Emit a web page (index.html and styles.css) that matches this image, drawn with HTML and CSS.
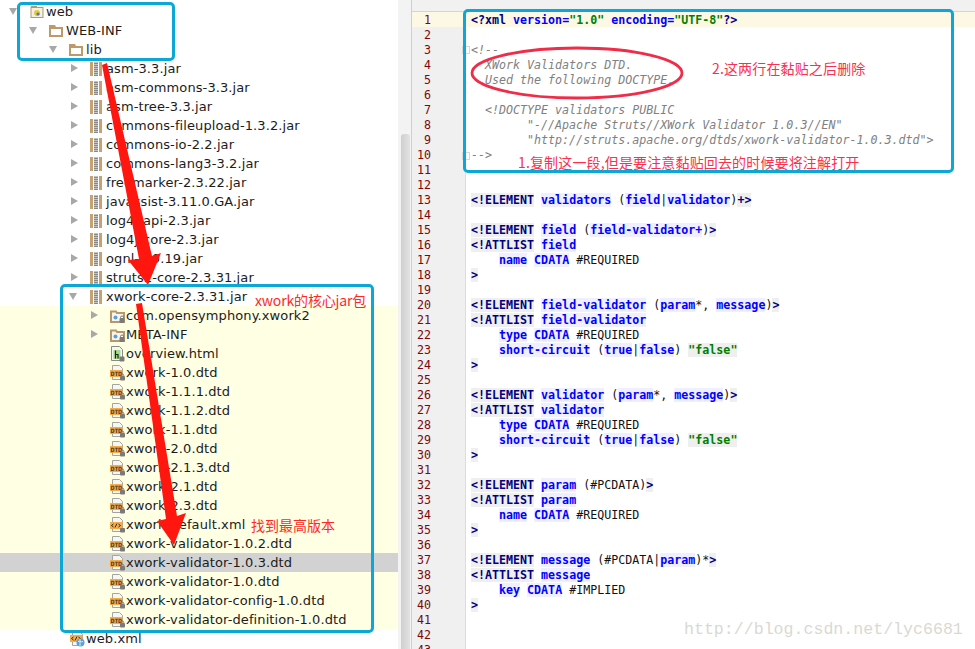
FILE: index.html
```html
<!DOCTYPE html>
<html lang="en">
<head>
<meta charset="utf-8">
<title>xwork-validator DTD</title>
<link rel="stylesheet" href="styles.css">
</head>
<body>
<svg class="defs" width="0" height="0" aria-hidden="true">
  <symbol id="i-web" viewBox="0 0 15 16">
    <rect x="1" y="3.5" width="12" height="10" fill="#f4f0e4" stroke="#b8976a"/>
    <rect x="1" y="2" width="6" height="2" fill="#b8976a"/>
    <circle cx="7" cy="9" r="3" fill="#e8c83a"/>
    <circle cx="8" cy="10" r="1.6" fill="#4a7ac0"/>
  </symbol>
  <symbol id="i-folder" viewBox="0 0 15 16">
    <path d="M0 3h6l1 2h7v10H0z" transform="translate(0 -1)" fill="#bd9a6a"/>
    <rect x="2" y="6" width="10" height="6" fill="#fff"/>
  </symbol>
  <symbol id="i-jar" viewBox="0 0 12 14">
    <rect x="0" y="0" width="3" height="14" fill="#c6a271"/>
    <rect x="9" y="0" width="3" height="14" fill="#c6a271"/>
    <rect x="4" y="0" width="4" height="14" fill="#c4c4c4"/>
    <path d="M4 1.5h4M4 3.5h4M4 5.5h4M4 7.5h4M4 9.5h4M4 11.5h4M4 13.5h4" stroke="#777" stroke-width=".8"/>
  </symbol>
  <symbol id="i-pkg" viewBox="0 0 15 16">
    <path d="M1 3.5h5l1 1.5h7v9H1z" fill="#f8f6ec" stroke="#b8976a" stroke-width="2"/>
    <circle cx="5.5" cy="9.5" r="2" fill="#5aa0d8"/>
    <rect x="9.5" y="10" width="5" height="5" rx="1" fill="#7a7a7a"/>
    <circle cx="12" cy="9.5" r="1.5" fill="none" stroke="#7a7a7a"/>
  </symbol>
  <symbol id="i-html" viewBox="0 0 15 16">
    <path d="M1.5 .5h8l3 3v11h-11z" fill="#f6f6f0" stroke="#8a8a8a"/>
    <rect x="3.5" y="4" width="7" height="9" fill="#a4dc8a"/>
    <path d="M5.5 4.5v8M5.5 8.5h2.5v4" fill="none" stroke="#222" stroke-width="1.2"/>
    <rect x="9.5" y="10.5" width="5" height="5" rx="1" fill="#7a7a7a"/>
  </symbol>
  <symbol id="i-dtd" viewBox="0 0 15 16">
    <path d="M2.5 .5h7l3 3v11h-10z" fill="#f6f6f2" stroke="#a4a4a4"/>
    <rect x="0" y="5" width="12.5" height="7" fill="#f4ab4c"/>
    <text class="dtd-label" x=".6" y="10.8" textLength="11.4" lengthAdjust="spacingAndGlyphs">DTD</text>
    <rect x="10" y="11" width="5" height="4.5" rx="1" fill="#7a7a7a"/>
    <circle cx="12.5" cy="10.5" r="1.3" fill="none" stroke="#7a7a7a"/>
  </symbol>
  <symbol id="i-xml" viewBox="0 0 15 16">
    <path d="M2.5 .5h7l3 3v11h-10z" fill="#f6f6f2" stroke="#a4a4a4"/>
    <rect x="0" y="5" width="12.5" height="7" fill="#f4ab4c"/>
    <path d="M3.5 7l-2 1.5 2 1.5M8.5 7l2 1.5-2 1.5M5 10.5l2-4" fill="none" stroke="#3a2a10"/>
    <rect x="10" y="11" width="5" height="4.5" rx="1" fill="#7a7a7a"/>
  </symbol>
  <symbol id="i-webxml" viewBox="0 0 15 16">
    <path d="M2.5 .5h7l3 3v11h-10z" fill="#f6f6f2" stroke="#a4a4a4"/>
    <rect x="0" y="4" width="12.5" height="7" fill="#f4ab4c"/>
    <path d="M3.5 6l-2 1.5 2 1.5M8.5 6l2 1.5-2 1.5M5 9.5l2-4" fill="none" stroke="#3a2a10"/>
    <circle cx="10.5" cy="11.5" r="4" fill="#5a9ee0"/>
    <path d="M8 10.5c2-1 3 1 5 0M10 8v7" stroke="#e8f2c0" fill="none"/>
  </symbol>
</svg>

<main class="app">
  <section class="tree">
    <div class="row d0"><i class="tw down"></i><svg class="ic"><use href="#i-web"/></svg><span>web</span></div>
    <div class="row d1"><i class="tw down"></i><svg class="ic dir"><use href="#i-folder"/></svg><span>WEB-INF</span></div>
    <div class="row d2"><i class="tw down"></i><svg class="ic dir"><use href="#i-folder"/></svg><span>lib</span></div>
    <div class="row d3"><i class="tw right"></i><svg class="ic jar"><use href="#i-jar"/></svg><span>asm-3.3.jar</span></div>
    <div class="row d3"><i class="tw right"></i><svg class="ic jar"><use href="#i-jar"/></svg><span>asm-commons-3.3.jar</span></div>
    <div class="row d3"><i class="tw right"></i><svg class="ic jar"><use href="#i-jar"/></svg><span>asm-tree-3.3.jar</span></div>
    <div class="row d3"><i class="tw right"></i><svg class="ic jar"><use href="#i-jar"/></svg><span>commons-fileupload-1.3.2.jar</span></div>
    <div class="row d3"><i class="tw right"></i><svg class="ic jar"><use href="#i-jar"/></svg><span>commons-io-2.2.jar</span></div>
    <div class="row d3"><i class="tw right"></i><svg class="ic jar"><use href="#i-jar"/></svg><span>commons-lang3-3.2.jar</span></div>
    <div class="row d3"><i class="tw right"></i><svg class="ic jar"><use href="#i-jar"/></svg><span>freemarker-2.3.22.jar</span></div>
    <div class="row d3"><i class="tw right"></i><svg class="ic jar"><use href="#i-jar"/></svg><span>javassist-3.11.0.GA.jar</span></div>
    <div class="row d3"><i class="tw right"></i><svg class="ic jar"><use href="#i-jar"/></svg><span>log4j-api-2.3.jar</span></div>
    <div class="row d3"><i class="tw right"></i><svg class="ic jar"><use href="#i-jar"/></svg><span>log4j-core-2.3.jar</span></div>
    <div class="row d3"><i class="tw right"></i><svg class="ic jar"><use href="#i-jar"/></svg><span>ognl-3.0.19.jar</span></div>
    <div class="row d3"><i class="tw right"></i><svg class="ic jar"><use href="#i-jar"/></svg><span>struts2-core-2.3.31.jar</span></div>
    <div class="row d3"><i class="tw down"></i><svg class="ic jar"><use href="#i-jar"/></svg><span>xwork-core-2.3.31.jar</span></div>
    <div class="scope">
      <div class="row d4"><i class="tw right"></i><svg class="ic"><use href="#i-pkg"/></svg><span>com.opensymphony.xwork2</span></div>
      <div class="row d4"><i class="tw right"></i><svg class="ic"><use href="#i-pkg"/></svg><span>META-INF</span></div>
      <div class="row d4"><i class="tw"></i><svg class="ic"><use href="#i-html"/></svg><span>overview.html</span></div>
      <div class="row d4"><i class="tw"></i><svg class="ic"><use href="#i-dtd"/></svg><span>xwork-1.0.dtd</span></div>
      <div class="row d4"><i class="tw"></i><svg class="ic"><use href="#i-dtd"/></svg><span>xwork-1.1.1.dtd</span></div>
      <div class="row d4"><i class="tw"></i><svg class="ic"><use href="#i-dtd"/></svg><span>xwork-1.1.2.dtd</span></div>
      <div class="row d4"><i class="tw"></i><svg class="ic"><use href="#i-dtd"/></svg><span>xwork-1.1.dtd</span></div>
      <div class="row d4"><i class="tw"></i><svg class="ic"><use href="#i-dtd"/></svg><span>xwork-2.0.dtd</span></div>
      <div class="row d4"><i class="tw"></i><svg class="ic"><use href="#i-dtd"/></svg><span>xwork-2.1.3.dtd</span></div>
      <div class="row d4"><i class="tw"></i><svg class="ic"><use href="#i-dtd"/></svg><span>xwork-2.1.dtd</span></div>
      <div class="row d4"><i class="tw"></i><svg class="ic"><use href="#i-dtd"/></svg><span>xwork-2.3.dtd</span></div>
      <div class="row d4"><i class="tw"></i><svg class="ic"><use href="#i-xml"/></svg><span>xwork-default.xml</span></div>
      <div class="row d4"><i class="tw"></i><svg class="ic"><use href="#i-dtd"/></svg><span>xwork-validator-1.0.2.dtd</span></div>
      <div class="row d4 selected"><i class="tw"></i><svg class="ic"><use href="#i-dtd"/></svg><span>xwork-validator-1.0.3.dtd</span></div>
      <div class="row d4"><i class="tw"></i><svg class="ic"><use href="#i-dtd"/></svg><span>xwork-validator-1.0.dtd</span></div>
      <div class="row d4"><i class="tw"></i><svg class="ic"><use href="#i-dtd"/></svg><span>xwork-validator-config-1.0.dtd</span></div>
      <div class="row d4"><i class="tw"></i><svg class="ic"><use href="#i-dtd"/></svg><span>xwork-validator-definition-1.0.dtd</span></div>
    </div>
    <div class="row d2"><i class="tw"></i><svg class="ic"><use href="#i-webxml"/></svg><span>web.xml</span></div>
  </section>

  <div class="scrollbar"><div class="thumb"></div></div>

  <section class="editor">
    <div class="editor-top"></div>
    <div class="editor-body">
      <div class="gutter">
        <div class="current">1</div><div>2</div><div>3</div><div>4</div><div>5</div><div>6</div><div>7</div><div>8</div><div>9</div><div>10</div><div>11</div><div>12</div><div>13</div><div>14</div><div>15</div><div>16</div><div>17</div><div>18</div><div>19</div><div>20</div><div>21</div><div>22</div><div>23</div><div>24</div><div>25</div><div>26</div><div>27</div><div>28</div><div>29</div><div>30</div><div>31</div><div>32</div><div>33</div><div>34</div><div>35</div><div>36</div><div>37</div><div>38</div><div>39</div><div>40</div><div>41</div><div>42</div><div>43</div>
      </div>
      <pre class="code"><div class="line current"><b class="t">&lt;?xml</b> <b class="a">version</b><b class="a">=</b><b class="s">"1.0"</b> <b class="a">encoding</b><b class="a">=</b><b class="s">"UTF-8"</b><b class="t">?&gt;</b></div><div class="line"> </div><div class="line c">&lt;!--</div><div class="line c">  XWork Validators DTD.</div><div class="line c">  Used the following DOCTYPE.</div><div class="line"> </div><div class="line c">  &lt;!DOCTYPE validators PUBLIC</div><div class="line c">        "-//Apache Struts//XWork Validator 1.0.3//EN"</div><div class="line c">        "http://struts.apache.org/dtds/xwork-validator-1.0.3.dtd"&gt;</div><div class="line c">--&gt;</div><div class="line"> </div><div class="line"> </div><div class="line"><b class="k">&lt;!ELEMENT</b> <b class="n">validators</b> (<b class="n">field</b>|<b class="n">validator</b>)<b class="k">+&gt;</b></div><div class="line"> </div><div class="line"><b class="k">&lt;!ELEMENT</b> <b class="n">field</b> (<b class="n">field-validator+</b>)<b class="k">&gt;</b></div><div class="line"><b class="k">&lt;!ATTLIST</b> <b class="n">field</b></div><div class="line">    <b class="n">name</b> <b class="n">CDATA</b> #REQUIRED</div><div class="line"><b class="k">&gt;</b></div><div class="line"> </div><div class="line"><b class="k">&lt;!ELEMENT</b> <b class="n">field-validator</b> (<b class="n">param</b>*, <b class="n">message</b>)<b class="k">&gt;</b></div><div class="line"><b class="k">&lt;!ATTLIST</b> <b class="n">field-validator</b></div><div class="line">    <b class="n">type</b> <b class="n">CDATA</b> #REQUIRED</div><div class="line">    <b class="n">short-circuit</b> (<b class="n">true</b>|<b class="n">false</b>) <b class="v">"false"</b></div><div class="line"><b class="k">&gt;</b></div><div class="line"> </div><div class="line"><b class="k">&lt;!ELEMENT</b> <b class="n">validator</b> (<b class="n">param</b>*, <b class="n">message</b>)<b class="k">&gt;</b></div><div class="line"><b class="k">&lt;!ATTLIST</b> <b class="n">validator</b></div><div class="line">    <b class="n">type</b> <b class="n">CDATA</b> #REQUIRED</div><div class="line">    <b class="n">short-circuit</b> (<b class="n">true</b>|<b class="n">false</b>) <b class="v">"false"</b></div><div class="line"><b class="k">&gt;</b></div><div class="line"> </div><div class="line"><b class="k">&lt;!ELEMENT</b> <b class="n">param</b> (#PCDATA)<b class="k">&gt;</b></div><div class="line"><b class="k">&lt;!ATTLIST</b> <b class="n">param</b></div><div class="line">    <b class="n">name</b> <b class="n">CDATA</b> #REQUIRED</div><div class="line"><b class="k">&gt;</b></div><div class="line"> </div><div class="line"><b class="k">&lt;!ELEMENT</b> <b class="n">message</b> (#PCDATA|<b class="n">param</b>)*<b class="k">&gt;</b></div><div class="line"><b class="k">&lt;!ATTLIST</b> <b class="n">message</b></div><div class="line">    <b class="n">key</b> <b class="n">CDATA</b> #IMPLIED</div><div class="line"><b class="k">&gt;</b></div></pre>
      <i class="fold fold-open"></i>
      <i class="fold fold-close"></i>
    </div>
  </section>

  <svg class="ink" width="975" height="649" viewBox="0 0 975 649" aria-hidden="true">
    <polygon class="arrow" points="102,65 107,63 152,256 161,253 148,285 128,260 139,259"/>
    <polygon class="arrow" points="136,304 142,303 177,516 186,513 174,545 157,521 166,519"/>
    <ellipse class="ring" cx="577" cy="73" rx="105" ry="25"/>
  </svg>
  <div class="box box-lib"></div>
  <div class="box box-core"></div>
  <div class="box box-code"></div>
  <p class="note note-core">xwork的核心jar包</p>
  <p class="note note-top">找到最高版本</p>
  <p class="note pink note-del">2.这两行在黏贴之后删除</p>
  <p class="note pink note-copy">1.复制这一段,但是要注意黏贴回去的时候要将注解打开</p>
  <p class="watermark">http://blog.csdn.net/lyc6681</p>
</main>
</body>
</html>
```

FILE: styles.css
```css
* { box-sizing: border-box; }
html, body { margin: 0; height: 649px; overflow: hidden; background: #fff; }
.defs { display: none; }
.app { position: relative; display: flex; width: 975px; height: 649px; overflow: hidden; }

/* project tree */
.tree {
  width: 398px;
  flex: none;
  padding-top: 2px;
  background: #fff;
  font: 13px/19px "DejaVu Sans", sans-serif;
  letter-spacing: .1px;
  color: #1c1c1c;
}
.row { display: flex; align-items: center; height: 19px; white-space: nowrap; }
.d0 { padding-left: 10px; }
.d1 { padding-left: 30px; }
.d2 { padding-left: 50px; }
.d3 { padding-left: 70px; }
.d4 { padding-left: 90px; }
.scope { background: #ffffe4; }
.selected { background: #d2d2d2; }
.tw { flex: none; width: 20px; height: 9px; position: relative; }
.tw.right::before {
  content: ""; position: absolute; left: 1px; top: 0;
  border-left: 7px solid #a8a8a8; border-top: 4.5px solid transparent; border-bottom: 4.5px solid transparent;
}
.tw.down::before {
  content: ""; position: absolute; left: -1px; top: 1px;
  border-top: 7px solid #a8a8a8; border-left: 4.5px solid transparent; border-right: 4.5px solid transparent;
}
.ic { flex: none; width: 15px; height: 16px; margin-right: 1px; }
.ic.jar { width: 12px; height: 14px; margin-right: 4px; }
.ic.dir { margin-left: -1px; margin-right: 2px; }
.dtd-label { font: 700 6px "DejaVu Sans", sans-serif; fill: #4a3a20; letter-spacing: 0; }

/* splitter */
.scrollbar { position: relative; flex: none; width: 14px; background: #f3f3f3; border-right: 1px solid #cfcfcf; }
.thumb {
  position: absolute; left: 3px; top: 134px; bottom: 0; width: 9px;
  background: linear-gradient(90deg, #cfcfcf, #e2e2e2);
  border-radius: 3px 3px 0 0;
}

/* editor */
.editor { flex: 1; display: flex; flex-direction: column; min-width: 0; }
.editor-top { flex: none; height: 12px; background: #f1f1f1; border-bottom: 1px solid #d4d4d4; }
.editor-body { position: relative; flex: 1; display: flex; min-height: 0; }
.gutter {
  flex: none; width: 54px; padding-right: 34px; background: #f0f0f0; border-right: 1px solid #dcdcdc;
  font: 11.65px/15px "DejaVu Sans Mono", monospace; color: #7c0808; text-align: right;
}
.gutter div { height: 15px; padding-top: 1px; }
.gutter .current { margin-right: -34px; padding-right: 34px; background: #fdf8e4; }
.code {
  flex: 1; margin: 0; min-width: 0;
  font: 11.65px/15px "DejaVu Sans Mono", monospace;
  font-variant-ligatures: none;
  color: #111;
}
.line { height: 15px; padding: 1px 0 0 5px; white-space: pre; }
.line.current { background: #fdf8e4; }
.code b { font-weight: 700; }
.t { color: #000080; }
.a { color: #0000ff; }
.s { color: #008000; }
.k { color: #000080; background: #efefef; }
.n { color: #0000ff; background: #efefff; }
.v { color: #008000; background: #efefef; }
.c { color: #808080; font-style: italic; }
.fold { position: absolute; left: 50px; width: 8px; height: 8px; background: #fff; border: 1px solid #d8d8d8; }
.fold-open { top: 34px; }
.fold-close { top: 140px; }

/* annotations drawn over the screenshot */
.ink { position: absolute; left: 0; top: 0; pointer-events: none; }
.arrow { fill: #ff170f; }
.ring { fill: none; stroke: #f02c48; stroke-width: 2.8; }
.box { position: absolute; border: 3px solid #0ba7d6; border-radius: 5px; }
.box-lib { left: 17px; top: 2px; width: 158px; height: 59px; }
.box-core { left: 60px; top: 284px; width: 314px; height: 349px; }
.box-code { left: 463px; top: 9px; width: 491px; height: 164px; }
.note {
  position: absolute; margin: 0; white-space: nowrap;
  font: 14px/18px "Noto Sans CJK SC", "DejaVu Sans", sans-serif; color: #ff2a1e;
}
.pink { color: #fb3050; letter-spacing: .15px; }
.note-core { left: 255px; top: 291px; letter-spacing: -.15px; }
.note-top { left: 251px; top: 516px; }
.note-del { left: 712px; top: 59px; }
.note-copy { left: 518px; top: 153px; }
.watermark {
  position: absolute; left: 684px; top: 619px; margin: 0; white-space: nowrap;
  font: 16.6px/22px "Liberation Mono", monospace; color: #d9d9d2;
}
```
